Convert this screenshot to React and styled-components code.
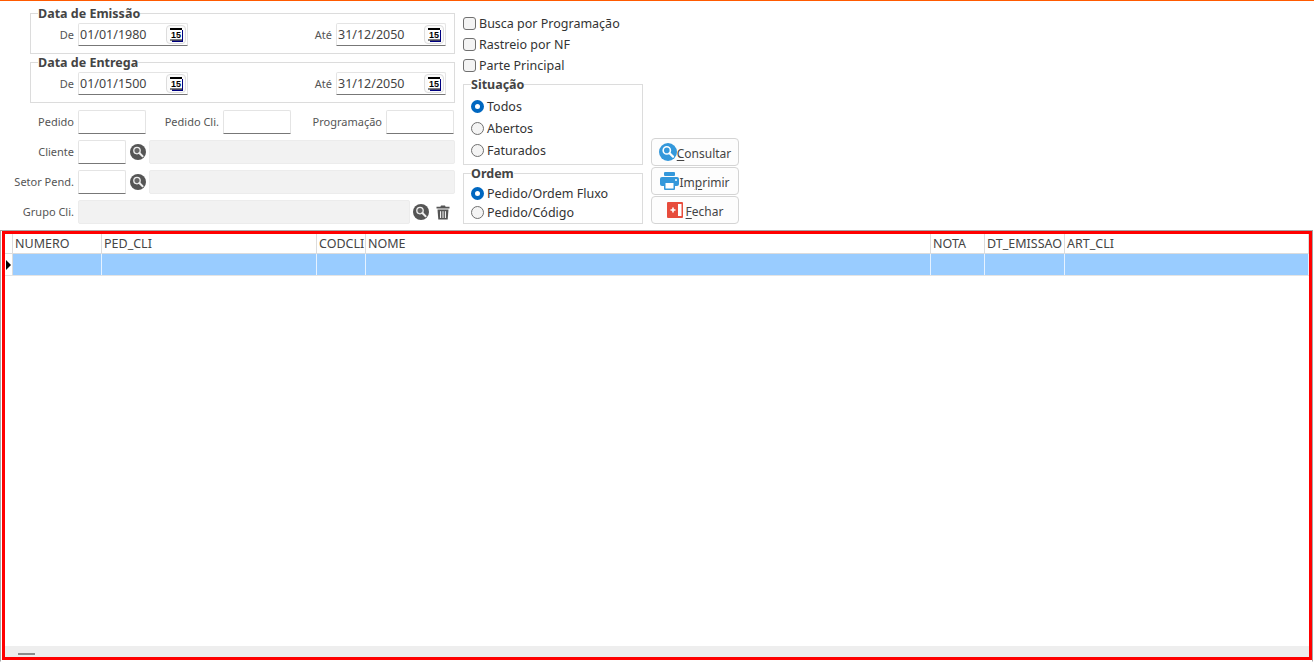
import React from "react";
import styled, { createGlobalStyle } from "styled-components";

const GlobalStyle = createGlobalStyle`
  html, body { margin: 0; padding: 0; background: #fff; }
  body { font-family: "Noto Sans", "Open Sans", sans-serif; overflow: hidden; }
`;

const COLUMNS = [
  { name: "NUMERO", width: 89 },
  { name: "PED_CLI", width: 215 },
  { name: "CODCLI", width: 49 },
  { name: "NOME", width: 565 },
  { name: "NOTA", width: 54 },
  { name: "DT_EMISSAO", width: 80 },
  { name: "ART_CLI", width: 244 },
];

function CalendarIcon() {
  return (
    <svg width="13" height="14" viewBox="0 0 13 14">
      <rect x="2" y="2" width="11" height="12" fill="#000080" />
      <rect x="0" y="0" width="12" height="12.5" fill="#fff" />
      <rect x="0" y="0" width="12" height="2" fill="#000" />
      <rect x="0" y="11.5" width="12" height="1" fill="#000" />
      <text x="6" y="10.4" textAnchor="middle" fontSize="9" fontWeight="700" fontFamily="Liberation Sans" fill="#000">15</text>
    </svg>
  );
}

function SearchDark() {
  return (
    <svg width="16" height="16" viewBox="0 0 16 16">
      <circle cx="8" cy="8" r="8" fill="#555" />
      <circle cx="7" cy="6.6" r="3.2" fill="#666" stroke="#eee" strokeWidth="1.3" />
      <path d="M9.4 9 L12.6 12.2" stroke="#eee" strokeWidth="2" strokeLinecap="round" />
    </svg>
  );
}

function TrashIcon() {
  return (
    <svg width="14" height="15" viewBox="0 0 14 15">
      <path d="M5 0.5h4l0.6 1.2H13.5v1.8H0.5V1.7H4.4z" fill="#555" />
      <path d="M1.5 4.6h11l-0.8 10H2.3z" fill="#555" />
      <path d="M4.6 6.2v6.8M7 6.2v6.8M9.4 6.2v6.8" stroke="#fff" strokeWidth="1" />
    </svg>
  );
}

function ConsultarIcon() {
  return (
    <svg width="18" height="18" viewBox="0 0 18 18">
      <circle cx="9" cy="9" r="9" fill="#3498db" />
      <circle cx="7.8" cy="7.4" r="3.6" fill="#3498db" stroke="#fff" strokeWidth="1.6" />
      <path d="M10.6 10.2 L14 13.6" stroke="#fff" strokeWidth="2.2" strokeLinecap="round" />
    </svg>
  );
}

function PrinterIcon() {
  return (
    <svg width="19" height="18" viewBox="0 0 19 18">
      <rect x="4" y="0" width="11" height="4" rx="1" fill="#3498db" />
      <rect x="0" y="5" width="19" height="9" rx="2" fill="#3498db" />
      <rect x="4" y="11" width="11" height="7" rx="1" fill="#3498db" />
      <rect x="5.5" y="11" width="8" height="5.5" fill="#fff" />
      <circle cx="16" cy="8" r="1" fill="#fff" />
    </svg>
  );
}

function FecharIcon() {
  return (
    <svg width="16" height="16" viewBox="0 0 16 16">
      <rect x="0" y="0" width="16" height="16" rx="1" fill="#e74c3c" />
      <rect x="11" y="2" width="3.5" height="12" fill="#fff" />
      <path d="M3.5 8h5M6 5.5v5" stroke="#fff" strokeWidth="1.6" />
    </svg>
  );
}

function DateField({ label, value, push }) {
  return (
    <>
      <DateLabel $push={push}>{label}</DateLabel>
      <DateBox>
        <DateInput defaultValue={value} readOnly />
        <CalButton><CalendarIcon /></CalButton>
      </DateBox>
    </>
  );
}

function App() {
  return (
    <Page>
      <GlobalStyle />
      <TopPanel>
        <LeftColumn>
          <DateGroup>
            <Legend>Data de Emissão</Legend>
            <DateRow>
              <DateField label="De" value="01/01/1980" />
              <DateField label="Até" value="31/12/2050" push />
            </DateRow>
          </DateGroup>
          <DateGroup>
            <Legend>Data de Entrega</Legend>
            <DateRow>
              <DateField label="De" value="01/01/1500" />
              <DateField label="Até" value="31/12/2050" push />
            </DateRow>
          </DateGroup>
          <FormRows>
            <FormRow>
              <FieldLabel $w={74}>Pedido</FieldLabel>
              <TextInput $w={68} />
              <FieldLabel $w={69}>Pedido Cli.</FieldLabel>
              <TextInput $w={68} />
              <FieldLabel $w={87}>Programação</FieldLabel>
              <TextInput $w={68} />
            </FormRow>
            <FormRow>
              <FieldLabel $w={74}>Cliente</FieldLabel>
              <TextInput $w={48} />
              <SearchSlot><SearchDark /></SearchSlot>
              <ReadOnlyBox $w={306} />
            </FormRow>
            <FormRow>
              <FieldLabel $w={74}>Setor Pend.</FieldLabel>
              <TextInput $w={48} />
              <SearchSlot><SearchDark /></SearchSlot>
              <ReadOnlyBox $w={306} />
            </FormRow>
            <FormRow>
              <FieldLabel $w={74}>Grupo Cli.</FieldLabel>
              <ReadOnlyBox $w={332} />
              <GroupActions>
                <SearchDark />
                <TrashIcon />
              </GroupActions>
            </FormRow>
          </FormRows>
        </LeftColumn>

        <MiddleColumn>
          <CheckRow><CheckBox type="checkbox" />Busca por Programação</CheckRow>
          <CheckRow><CheckBox type="checkbox" />Rastreio por NF</CheckRow>
          <CheckRow><CheckBox type="checkbox" />Parte Principal</CheckRow>
          <SituacaoGroup>
            <Legend>Situação</Legend>
            <RadioRow $h={22}><Radio type="radio" name="situacao" defaultChecked />Todos</RadioRow>
            <RadioRow $h={22}><Radio type="radio" name="situacao" />Abertos</RadioRow>
            <RadioRow $h={22}><Radio type="radio" name="situacao" />Faturados</RadioRow>
          </SituacaoGroup>
          <OrdemGroup>
            <Legend>Ordem</Legend>
            <RadioRow $h={19}><Radio type="radio" name="ordem" defaultChecked />Pedido/Ordem Fluxo</RadioRow>
            <RadioRow $h={19}><Radio type="radio" name="ordem" />Pedido/Código</RadioRow>
          </OrdemGroup>
        </MiddleColumn>

        <ButtonColumn>
          <ActionButton><ConsultarIcon /><span><Key>C</Key>onsultar</span></ActionButton>
          <ActionButton><PrinterIcon /><span>Im<Key>p</Key>rimir</span></ActionButton>
          <ActionButton $gap={3}><FecharIcon /><span><Key>F</Key>echar</span></ActionButton>
        </ButtonColumn>
      </TopPanel>

      <GridFrame>
        <GridHighlight>
          <GridBody>
            <HeaderRow>
              <IndicatorCell />
              {COLUMNS.map((col) => (
                <HeaderCell key={col.name} $w={col.width}>{col.name}</HeaderCell>
              ))}
            </HeaderRow>
            <DataRow>
              <IndicatorCell $row><Pointer /></IndicatorCell>
              {COLUMNS.map((col) => (
                <DataCell key={col.name} $w={col.width} />
              ))}
            </DataRow>
          </GridBody>
          <GridFooter><ScrollThumb /></GridFooter>
        </GridHighlight>
      </GridFrame>
    </Page>
  );
}

export default App;

const Page = styled.div`
  width: 1314px;
  height: 662px;
  display: flex;
  flex-direction: column;
  border-top: 1px solid #ff5a00;
  box-sizing: border-box;
  overflow: hidden;
`;

const TopPanel = styled.div`
  height: 229px;
  flex: none;
  display: flex;
`;

const LeftColumn = styled.div`
  width: 455px;
  padding-top: 5px;
  box-sizing: border-box;
`;

const Group = styled.fieldset`
  margin: 0;
  min-width: 0;
  box-sizing: border-box;
  border: 1px solid #dcdcdc;
`;

const Legend = styled.legend`
  padding: 1px 0 0;
  font-size: 12.5px;
  line-height: 13px;
  font-weight: 700;
  color: #444;
`;

const DateGroup = styled(Group)`
  margin: 0 0 1px 30px;
  width: 425px;
  height: 48px;
  padding: 3px 8px 0 0;
  legend { margin-left: 7px; }
`;

const DateRow = styled.div`
  display: flex;
  align-items: center;
  gap: 4px;
`;

const DateLabel = styled.span`
  width: ${(p) => (p.$push ? "auto" : "43px")};
  margin-left: ${(p) => (p.$push ? "auto" : "0")};
  margin-top: -1px;
  text-align: right;
  font-size: 11px;
  color: #555;
`;

const DateBox = styled.div`
  width: 110px;
  height: 23px;
  box-sizing: border-box;
  display: flex;
  align-items: center;
  padding-right: 1px;
  border: 1px solid #e4e4e4;
  border-bottom: 1px solid #777;
  border-radius: 2px 2px 0 0;
  background: #fff;
`;

const DateInput = styled.input`
  width: 86px;
  flex: none;
  border: 0;
  outline: 0;
  padding: 0 0 0 1px;
  background: transparent;
  font: 12.5px "Noto Sans", sans-serif;
  color: #444;
`;

const CalButton = styled.div`
  width: 21px;
  height: 19px;
  box-sizing: border-box;
  margin-left: auto;
  display: flex;
  align-items: center;
  justify-content: center;
  border: 1px solid #ddd;
  border-radius: 4px;
  background: #fbfbfb;
`;

const FormRows = styled.div`
  margin-top: 7px;
  display: flex;
  flex-direction: column;
  gap: 6px;
`;

const FormRow = styled.div`
  height: 24px;
  display: flex;
  align-items: center;
  gap: 4px;
`;

const FieldLabel = styled.span`
  width: ${(p) => p.$w}px;
  flex: none;
  margin-top: -1px;
  text-align: right;
  white-space: nowrap;
  font-size: 11px;
  color: #555;
`;

const TextInput = styled.input`
  width: ${(p) => p.$w}px;
  height: 24px;
  flex: none;
  box-sizing: border-box;
  padding: 0;
  outline: 0;
  border: 1px solid #e4e4e4;
  border-bottom: 1px solid #777;
  border-radius: 2px 2px 0 0;
  background: #fff;
`;

const SearchSlot = styled.div`
  width: 16px;
  height: 16px;
  flex: none;
  margin-right: -1px;
  margin-top: -3px;
`;

const ReadOnlyBox = styled.div`
  width: ${(p) => p.$w}px;
  height: 24px;
  flex: none;
  box-sizing: border-box;
  border: 1px solid #ececec;
  border-radius: 2px;
  background: #f2f2f2;
`;

const GroupActions = styled.div`
  display: flex;
  align-items: center;
  gap: 7px;
  margin-left: -1px;
`;

const MiddleColumn = styled.div`
  width: 180px;
  margin-left: 8px;
  padding-top: 12px;
  box-sizing: border-box;
  font-size: 12.5px;
  color: #333;
`;

const CheckRow = styled.label`
  height: 21px;
  display: flex;
  align-items: center;
  gap: 3px;
  white-space: nowrap;
`;

const CheckBox = styled.input`
  appearance: none;
  width: 13px;
  height: 13px;
  margin: 0;
  flex: none;
  box-sizing: border-box;
  border: 1px solid #707070;
  border-radius: 3px;
  background: #f4f4f4;
`;

const SituacaoGroup = styled(Group)`
  width: 180px;
  height: 88px;
  margin: 1px 0 1px;
  padding: 4px 0 0 7px;
`;

const OrdemGroup = styled(Group)`
  width: 180px;
  height: 58px;
  margin: 0;
  padding: 4px 0 0 7px;
`;

const RadioRow = styled.label`
  height: ${(p) => p.$h}px;
  display: flex;
  align-items: center;
  gap: 3px;
  white-space: nowrap;
`;

const Radio = styled.input`
  appearance: none;
  width: 13px;
  height: 13px;
  margin: 0;
  flex: none;
  box-sizing: border-box;
  border: 1px solid #707070;
  border-radius: 50%;
  background: #f4f4f4;
  &:checked {
    border: 4px solid #0067c0;
    background: #fff;
  }
`;

const ButtonColumn = styled.div`
  width: 88px;
  margin-left: 8px;
  padding-top: 137px;
  display: flex;
  flex-direction: column;
  gap: 1px;
`;

const ActionButton = styled.div`
  height: 28px;
  flex: none;
  box-sizing: border-box;
  display: flex;
  align-items: center;
  justify-content: center;
  gap: ${(p) => p.$gap || 0}px;
  border: 1px solid #d4d4d4;
  border-radius: 4px;
  background: #fdfdfd;
  font-size: 12px;
  color: #444;
  span { margin-top: 2px; }
`;

const Key = styled.u`
  text-underline-offset: 2px;
`;

const GridFrame = styled.div`
  flex: 1;
  min-height: 0;
  margin-right: 1px;
  padding: 0 0 1px 1px;
  box-sizing: border-box;
  border: 1px solid #a6a6a6;
  border-bottom-color: transparent;
`;

const GridHighlight = styled.div`
  height: 100%;
  box-sizing: border-box;
  display: flex;
  flex-direction: column;
  border: 3px solid #ff0000;
`;

const GridBody = styled.div`
  flex: 1;
  min-height: 0;
  overflow: hidden;
`;

const HeaderRow = styled.div`
  height: 20px;
  display: flex;
  box-sizing: border-box;
  border-bottom: 1px solid #dcdcdc;
`;

const DataRow = styled.div`
  height: 22px;
  display: flex;
  box-sizing: border-box;
  border-bottom: 1px solid #e4e4e4;
`;

const IndicatorCell = styled.div`
  width: 8px;
  flex: none;
  box-sizing: border-box;
  display: flex;
  align-items: center;
  border-right: 1px solid #dcdcdc;
`;

const Pointer = styled.span`
  width: 0;
  height: 0;
  margin-left: 1px;
  border-left: 5px solid #000;
  border-top: 5px solid transparent;
  border-bottom: 5px solid transparent;
`;

const HeaderCell = styled.div`
  width: ${(p) => p.$w}px;
  flex: none;
  box-sizing: border-box;
  padding-left: 2px;
  border-right: 1px solid #dcdcdc;
  font-size: 12.5px;
  line-height: 19px;
  color: #444;
  white-space: nowrap;
  overflow: hidden;
`;

const DataCell = styled.div`
  width: ${(p) => p.$w}px;
  flex: none;
  box-sizing: border-box;
  background: #99ccff;
  border-right: 1px solid #e6f2ff;
`;

const GridFooter = styled.div`
  height: 11px;
  flex: none;
  box-sizing: border-box;
  display: flex;
  align-items: flex-end;
  padding: 0 0 2px 13px;
  background: #eeeeee;
`;

const ScrollThumb = styled.div`
  width: 17px;
  height: 2px;
  background: #8a8a8a;
`;
